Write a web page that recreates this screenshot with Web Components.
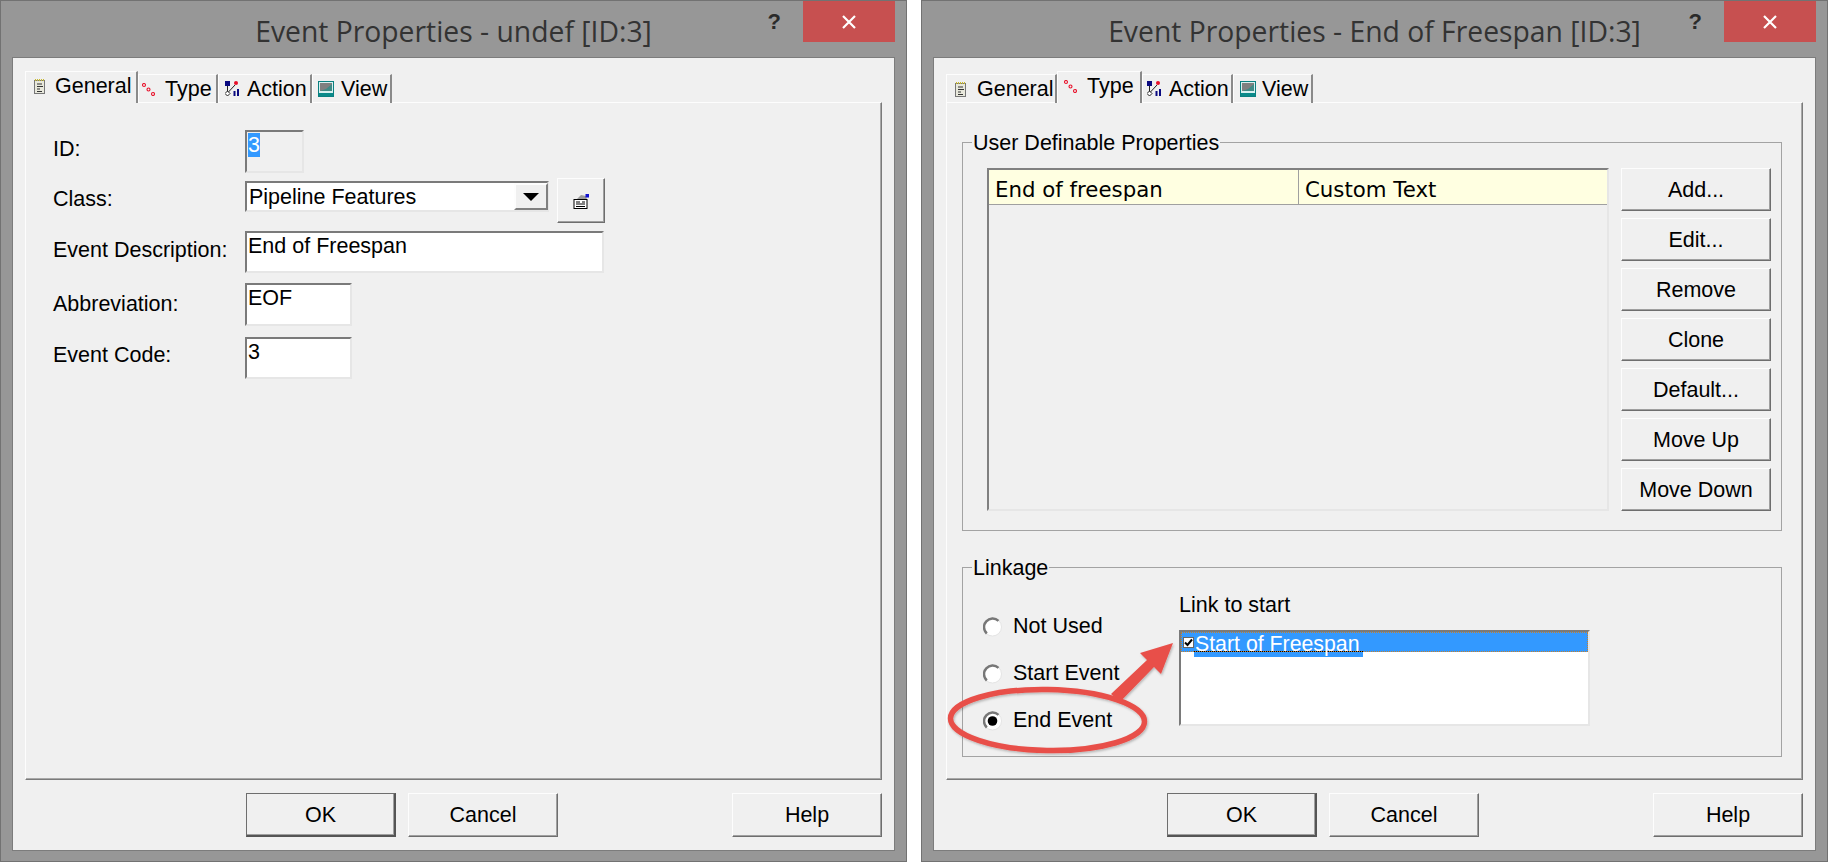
<!DOCTYPE html>
<html>
<head>
<meta charset="utf-8">
<title>Event Properties</title>
<style>
html, body { margin: 0; padding: 0; background: #fff; }
body { display: flex; gap: 14px; width: 1841px; height: 863px; overflow: hidden; font-family: "Liberation Sans", Arial, sans-serif; font-size: 21.5px; color: #000; }
</style>
</head>
<body>

<ep-window heading="Event Properties - undef [ID:3]">
    <ep-tabstrip slot="tabs">
        <ep-tab active icon="note" style="width:113px;--pad:8px;--gap:10px">General</ep-tab>
        <ep-tab icon="type" style="width:80px;--pad:3px;--gap:10px">Type</ep-tab>
        <ep-tab icon="action" style="width:94px;--pad:6px;--gap:7px">Action</ep-tab>
        <ep-tab icon="view" style="width:80px;--pad:5px;--gap:7px">View</ep-tab>
    </ep-tabstrip>
    <ep-general></ep-general>
    <ep-button slot="footer" default>OK</ep-button>
    <ep-button slot="footer">Cancel</ep-button>
    <ep-button slot="footer" style="margin-left:162px">Help</ep-button>
</ep-window>

<ep-window heading="Event Properties - End of Freespan [ID:3]">
    <ep-tabstrip slot="tabs">
        <ep-tab icon="note" style="width:111px;--pad:8px;--gap:11px">General</ep-tab>
        <ep-tab active icon="type" style="width:85px;--pad:6px;--gap:10px">Type</ep-tab>
        <ep-tab icon="action" style="width:91px;--pad:4px;--gap:7px">Action</ep-tab>
        <ep-tab icon="view" style="width:80px;--pad:6px;--gap:6px">View</ep-tab>
    </ep-tabstrip>
    <ep-type></ep-type>
    <ep-button slot="footer" default>OK</ep-button>
    <ep-button slot="footer">Cancel</ep-button>
    <ep-button slot="footer" style="margin-left:162px">Help</ep-button>
    <svg slot="overlay" width="907" height="862" viewBox="0 0 907 862" fill="none">
        <defs><filter id="sh" x="-10%" y="-10%" width="120%" height="120%"><feDropShadow dx="1" dy="1.5" stdDeviation="1.2" flood-color="#000" flood-opacity=".25"/></filter></defs>
        <g filter="url(#sh)">
            <ellipse cx="126.5" cy="720" rx="97" ry="30.5" stroke="#e8504a" stroke-width="5.5" transform="rotate(1 126.5 720)"/>
            <polygon points="190,694 226,660 219,653 252,643 240,674 233,667 199,702" fill="#e8504a"/>
        </g>
    </svg>
</ep-window>

<script>
const ICONS = {
    note: '<svg width="11" height="15" viewBox="0 0 11 15"><rect x=".5" y="1.500" width="10" height="13" fill="#e8e8dc" stroke="#777"/><path d="M1 1h9" stroke="#c8b830" stroke-width="2" stroke-dasharray="1 1"/><path d="M3 5h5M3 7.500h6M3 10h3M3 12.500h5" stroke="#333"/></svg>',
    type: '<svg width="13" height="13" viewBox="0 0 13 13" fill="none" stroke="#e8102a" stroke-width="1.1"><circle cx="2" cy="2" r="1.500"/><circle cx="6.500" cy="6.500" r="1.500"/><circle cx="11" cy="11" r="1.500"/></svg>',
    action: '<svg width="15" height="16" viewBox="0 0 15 16"><rect x="0" y="0" width="5" height="5" fill="#0a0a80"/><circle cx="11" cy="2" r="2" fill="#e8102a"/><path d="M2.500 5v7M2.500 12L10 4" stroke="#222" fill="none"/><path d="M2.500 10l2.500 2.500-2.500 2.500L0 12.500z" fill="#fff" stroke="#222"/><rect x="8.500" y="10" width="2" height="5" fill="#0a0a80"/><rect x="12" y="8" width="2" height="7" fill="#0a0a80"/></svg>',
    view: '<svg width="16" height="16" viewBox="0 0 16 16"><rect x=".5" y=".5" width="15" height="15" fill="#d8f0f0" stroke="#0a8080"/><rect x="2" y="2" width="12" height="8" fill="#808080"/><path d="M2 10l6-2 6-5v7z" fill="#3f8a86"/><rect x="1" y="12" width="14" height="3" fill="#0a8a8a"/></svg>',
    props: '<svg width="16" height="15" viewBox="0 0 16 15"><path d="M8 1l5 1 1 4H3z" fill="#9a9a9a"/><rect x="12.500" y="0" width="3.500" height="3.500" fill="#1010d0"/><rect x="1" y="5.500" width="13" height="9" fill="#fff" stroke="#000"/><path d="M3 8h4M9 8h3M3 10h9M3 12.500h9" stroke="#000"/></svg>'
};

const RAISED = 'border:1px solid;border-color:#fdfdfd #6e6e6e #6e6e6e #fdfdfd;box-shadow:inset -1px -1px 0 #a0a0a0;';
const SUNKEN = 'border:2px solid;border-color:#7a7a7a #e6e6e6 #e6e6e6 #7a7a7a;';

class EpElement extends HTMLElement {
    constructor() {
        super();
        this.attachShadow({ mode: 'open' });
    }
}

customElements.define('ep-window', class extends EpElement {
    connectedCallback() {
        const heading = this.getAttribute('heading') || '';
        this.shadowRoot.innerHTML =
            '<style>' +
            ':host{display:flex;flex-direction:column;position:relative;box-sizing:border-box;flex:none;width:907px;height:862px;background:#979797;border:1px solid #727272;}' +
            '.titlebar{display:grid;grid-template-columns:1fr auto 1fr;height:56px;flex:none;}' +
            '.heading{grid-column:2;align-self:start;margin-top:10px;font:28.3px/40px "Open Sans","Noto Sans",sans-serif;color:#333;white-space:nowrap;}' +
            '.controls{grid-column:3;justify-self:end;display:flex;align-items:flex-start;margin-right:11px;}' +
            '.q{font:bold 22px/24px "Liberation Sans",sans-serif;color:#2a2a2a;margin:9px 22px 0 0;}' +
            '.close{width:92px;height:41px;background:#c75050;display:flex;align-items:center;justify-content:center;}' +
            '.client{flex:1;display:flex;flex-direction:column;min-height:0;margin:0 11px 10px;border:1px solid #7c7c7c;background:#f0f0f0;padding:14px 12px 13px 12px;}' +
            '.pane{flex:1;min-height:0;box-sizing:border-box;background:#f0f0f0;border:1px solid;border-color:#fdfdfd #7a7a7a #7a7a7a #fdfdfd;box-shadow:inset -1px -1px 0 #a8a8a8;}' +
            '.footer{display:flex;flex:none;gap:12px;padding:13px 0 0 221px;}' +
            '.overlay{position:absolute;left:-1px;top:-1px;pointer-events:none;}' +
            '</style>' +
            '<div class="titlebar"><div class="heading"></div>' +
            '<div class="controls"><span class="q">?</span><div class="close"><svg width="14" height="14" viewBox="0 0 14 14"><path d="M1 1l12 12M13 1L1 13" stroke="#fff" stroke-width="2.2"/></svg></div></div></div>' +
            '<div class="client"><slot name="tabs"></slot><div class="pane"><slot></slot></div><div class="footer"><slot name="footer"></slot></div></div>' +
            '<div class="overlay"><slot name="overlay"></slot></div>';
        this.shadowRoot.querySelector('.heading').textContent = heading;
    }
});

customElements.define('ep-tabstrip', class extends EpElement {
    connectedCallback() {
        this.shadowRoot.innerHTML =
            '<style>:host{display:flex;align-items:flex-end;height:31px;flex:none;margin-bottom:-1px;position:relative;z-index:1;}</style><slot></slot>';
    }
});

customElements.define('ep-tab', class extends EpElement {
    connectedCallback() {
        const icon = ICONS[this.getAttribute('icon')] || '';
        this.shadowRoot.innerHTML =
            '<style>' +
            ':host{display:flex;align-items:center;box-sizing:border-box;height:29px;padding-left:var(--pad,6px);gap:var(--gap,8px);border:1px solid;border-width:1px 2px 0 1px;border-color:#fdfdfd #8a8a8a #fdfdfd #fdfdfd;white-space:nowrap;font-size:21.5px;}' +
            ':host([active]){height:32px;background:#f0f0f0;padding-bottom:2px;}' +
            'svg{display:block;flex:none;}' +
            '</style>' + icon + '<slot></slot>';
    }
});

customElements.define('ep-button', class extends EpElement {
    connectedCallback() {
        this.shadowRoot.innerHTML =
            '<style>' +
            ':host{display:flex;align-items:center;justify-content:center;box-sizing:border-box;width:150px;height:44px;flex:none;padding-top:1px;' + RAISED + 'font-size:21.5px;}' +
            ':host([default]){border-color:#6e6e6e #555 #555 #6e6e6e;border-bottom-width:2px;border-right-width:2px;}' +
            '</style><slot></slot>';
    }
});

customElements.define('ep-field', class extends EpElement {
    connectedCallback() {
        this.shadowRoot.innerHTML =
            '<style>' +
            ':host{display:block;box-sizing:border-box;background:#fff;' + SUNKEN + 'padding:0 1px;font-size:21.5px;line-height:27px;white-space:nowrap;}' +
            ':host([readonly]){background:#f0f0f0;}' +
            '::slotted(mark){background:#3399ff;color:#fff;}' +
            '</style><slot></slot>';
    }
});

customElements.define('ep-combo', class extends EpElement {
    connectedCallback() {
        this.shadowRoot.innerHTML =
            '<style>' +
            ':host{display:flex;box-sizing:border-box;background:#fff;border:2px solid;border-color:#7a7a7a #e6e6e6 #e6e6e6 #7a7a7a;font-size:21.5px;line-height:29px;}' +
            '.v{flex:1;padding-left:2px;white-space:nowrap;height:27px;}' +
            '.b{box-sizing:border-box;width:34px;background:#f0f0f0;display:flex;align-items:center;justify-content:center;border:2px solid;border-color:#fdfdfd #808080 #808080 #fdfdfd;margin-right:-1px;}' +
            '.t{width:0;height:0;border:8px solid transparent;border-top:8px solid #000;border-bottom:0;}' +
            '</style><div class="v"><slot></slot></div><div class="b"><span class="t"></span></div>';
    }
});

customElements.define('ep-row', class extends EpElement {
    connectedCallback() {
        this.shadowRoot.innerHTML =
            '<style>' +
            ':host{display:grid;grid-template-columns:192px auto;align-items:center;justify-content:start;font-size:21.5px;}' +
            '.l{padding-bottom:var(--lift,0px);}' +
            '</style><div class="l"><slot name="label"></slot></div><div class="f"><slot></slot></div>';
    }
});

customElements.define('ep-general', class extends EpElement {
    connectedCallback() {
        this.shadowRoot.innerHTML =
            '<style>' +
            ':host{display:flex;flex-direction:column;padding:27px 0 0 27px;}' +
            'ep-row{flex:none;}' +
            '.combo{display:flex;gap:8px;align-items:flex-start;}' +
            '.combo ep-combo{margin-top:3px;}' +
            '</style>' +
            '<ep-row style="--lift:5px"><span slot="label">ID:</span><ep-field readonly style="width:59px;height:43px"><mark>3</mark></ep-field></ep-row>' +
            '<ep-row style="margin-top:5px;--lift:2px"><span slot="label">Class:</span><div class="combo"><ep-combo style="width:304px;height:31px">Pipeline Features</ep-combo><ep-button style="width:48px;height:45px">' + ICONS.props + '</ep-button></div></ep-row>' +
            '<ep-row style="margin-top:8px;--lift:4px"><span slot="label">Event Description:</span><ep-field style="width:359px;height:42px">End of Freespan</ep-field></ep-row>' +
            '<ep-row style="margin-top:10px;--lift:0px"><span slot="label">Abbreviation:</span><ep-field style="width:107px;height:43px">EOF</ep-field></ep-row>' +
            '<ep-row style="margin-top:11px;--lift:6px"><span slot="label">Event Code:</span><ep-field style="width:107px;height:42px">3</ep-field></ep-row>';
    }
});

customElements.define('ep-group', class extends EpElement {
    connectedCallback() {
        const legend = this.getAttribute('legend') || '';
        this.shadowRoot.innerHTML =
            '<style>' +
            ':host{display:block;font-size:21.5px;}' +
            'fieldset{margin:0;padding:0;border:1px solid #a3a3a3;min-width:0;}' +
            'legend{margin-left:9px;padding:2px 1px 0;line-height:22px;}' +
            '</style><fieldset><legend></legend><slot></slot></fieldset>';
        this.shadowRoot.querySelector('legend').textContent = legend;
    }
});

customElements.define('ep-radio', class extends EpElement {
    connectedCallback() {
        const dot = this.hasAttribute('checked') ? '<circle cx="9.500" cy="10" r="4.800" fill="#000"/>' : '';
        this.shadowRoot.innerHTML =
            '<style>:host{display:flex;align-items:center;gap:11px;height:47px;font-size:21.5px;}svg{flex:none;display:block;}</style>' +
            '<svg width="19" height="20" viewBox="0 0 19 20"><circle cx="9.500" cy="10" r="9" fill="#fff" stroke="#e4e4e4"/><path d="M15.500 3.800A8.500 8.500 0 0 0 3.800 16.500" fill="none" stroke="#777" stroke-width="2.500"/>' + dot + '</svg><slot></slot>';
    }
});

customElements.define('ep-type', class extends EpElement {
    connectedCallback() {
        const names = ['Add...', 'Edit...', 'Remove', 'Clone', 'Default...', 'Move Up', 'Move Down'];
        this.shadowRoot.innerHTML =
            '<style>' +
            ':host{display:block;padding:27px 0 0 15px;width:820px;}' +
            '.props{display:flex;padding:14px 0 19px 24px;}' +
            '.table{box-sizing:border-box;width:622px;height:343px;border:2px solid;border-color:#808080 #e6e6e6 #e6e6e6 #808080;}' +
            '.head{display:grid;grid-template-columns:309px 1fr;height:34px;background:#ffffe1;border-bottom:1px solid #a0a0a0;font:21.3px/40px "DejaVu Sans",sans-serif;}' +
            '.head span{padding-left:6px;white-space:nowrap;overflow:hidden;}' +
            '.head span+span{border-left:1px solid #a0a0a0;}' +
            '.btns{display:flex;flex-direction:column;gap:7px;margin-left:12px;}' +
            '.btns ep-button{height:43px;}' +
            '.link{display:flex;padding:10px 0 12px 20px;}' +
            '.radios{width:196px;padding-top:14px;}' +
            '.cap{height:41px;line-height:33px;}' +
            '.list{box-sizing:border-box;width:411px;height:96px;background:#fff;border:2px solid;border-color:#7a7a7a #e6e6e6 #e6e6e6 #7a7a7a;}' +
            '.sel{display:flex;height:20px;background:#3399ff;outline:1px dotted #c8802a;outline-offset:-1px;}' +
            '.chk{box-sizing:border-box;width:11px;height:11px;margin:5px 0 0 2px;background:#fff;border:1px solid #666;display:flex;flex:none;}' +
            '.txt{box-sizing:border-box;height:25px;padding:0 3px 0 1px;font-size:21.3px;line-height:25px;color:#fff;white-space:nowrap;background:#3399ff repeating-linear-gradient(90deg,#000 0 1px,#fff 1px 2px) 0 19px/100% 1px no-repeat;}' +
            'ep-group+ep-group{margin-top:24px;}' +
            '</style>' +
            '<ep-group legend="User Definable Properties"><div class="props">' +
            '<div class="table"><div class="head"><span>End of freespan</span><span>Custom Text</span></div></div>' +
            '<div class="btns">' + names.map(n => '<ep-button>' + n + '</ep-button>').join('') + '</div>' +
            '</div></ep-group>' +
            '<ep-group legend="Linkage"><div class="link">' +
            '<div class="radios"><ep-radio>Not Used</ep-radio><ep-radio>Start Event</ep-radio><ep-radio checked>End Event</ep-radio></div>' +
            '<div><div class="cap">Link to start</div><div class="list"><div class="sel"><span class="chk"><svg width="9" height="9" viewBox="0 0 9 9"><path d="M1 4.500l2.500 2.500L8 1.500" fill="none" stroke="#000" stroke-width="2"/></svg></span><span class="txt">Start of Freespan</span></div></div></div>' +
            '</div></ep-group>';
    }
});
</script>
</body>
</html>
